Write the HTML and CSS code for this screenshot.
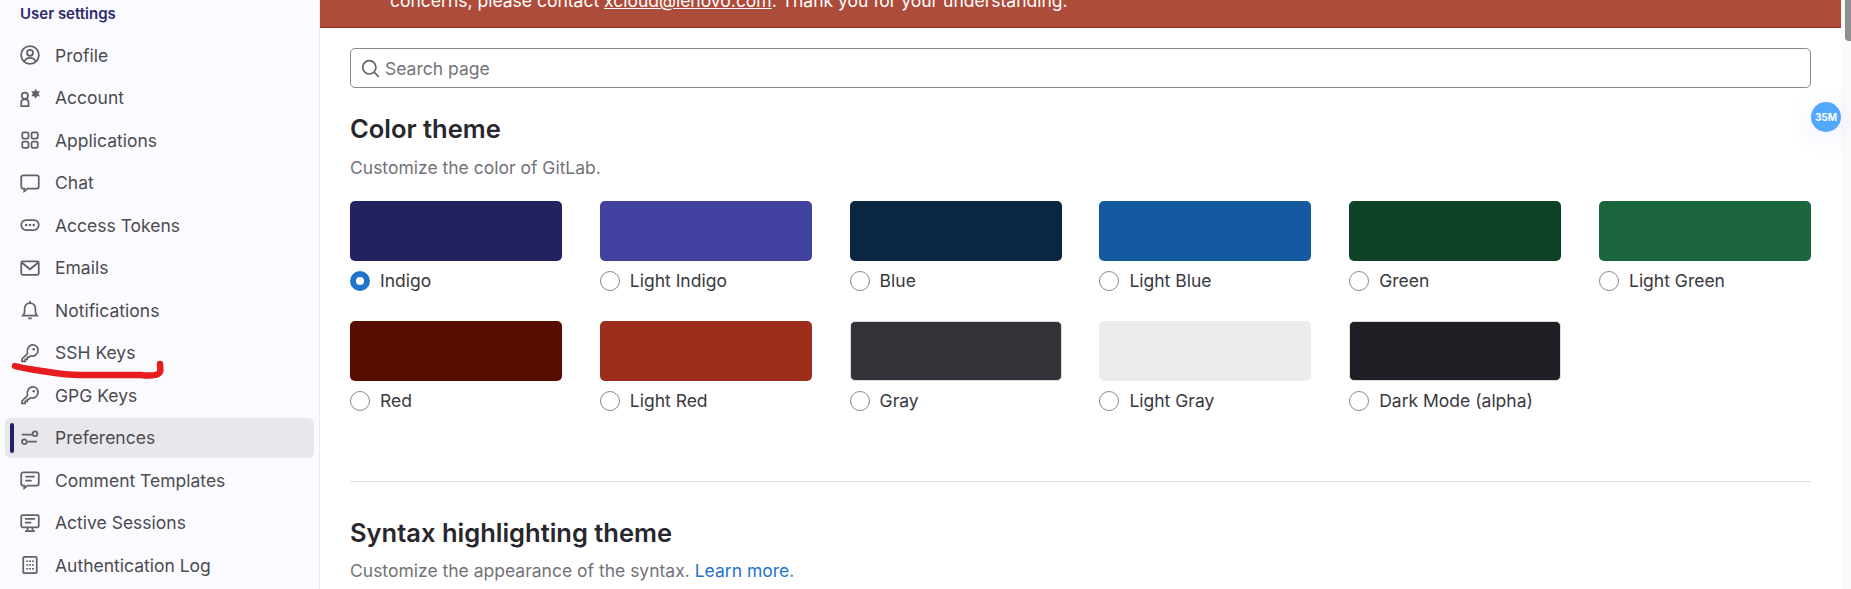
FILE: index.html
```html
<!DOCTYPE html>
<html lang="en">
<head>
    <meta http-equiv="Content-Type" content="text/html; charset=UTF-8">
    <meta name="viewport" content="width=device-width, initial-scale=1.0">
    <title>Preferences</title>
    <link rel="stylesheet" href="styles.css">
</head>
<body>
    <!-- Left navigation -->
    <nav class="sidebar">
        <div class="sidebar-title">User settings</div>
        <a class="nav-item">
            <svg class="nav-icon" viewBox="0 0 16 16"><circle cx="8" cy="8" r="7.1"/><circle cx="8" cy="6.2" r="2.4"/><path d="M3.6 13.2c.6-2 2.3-3 4.4-3s3.8 1 4.4 3"/></svg>
            <span>Profile</span>
        </a>
        <a class="nav-item">
            <svg class="nav-icon" viewBox="0 0 16 16"><circle cx="3.900" cy="6.200" r="2.500"/><path d="M1 14.400v-3c0-1.300 1-2.300 2.300-2.300h1.200c1.300 0 2.300 1 2.300 2.300v3z"/><path class="icon-solid" d="M12.500 .6l1.100 2h2.300l-1.100 2 1.100 2h-2.300l-1.100 2-1.100-2H9.100l1.100-2-1.100-2h2.300z"/></svg>
            <span>Account</span>
        </a>
        <a class="nav-item">
            <svg class="nav-icon" viewBox="0 0 16 16"><rect x="1.800" y="1.800" width="5" height="5" rx="1.300"/><rect x="9.200" y="1.800" width="5" height="5" rx="1.300"/><rect x="1.800" y="9.200" width="5" height="5" rx="1.300"/><rect x="9.200" y="9.200" width="5" height="5" rx="1.300"/></svg>
            <span>Applications</span>
        </a>
        <a class="nav-item">
            <svg class="nav-icon" viewBox="0 0 16 16"><path d="M2.600 1.800h10.800c.9 0 1.600.7 1.600 1.600v7.400c0 .9-.7 1.600-1.600 1.600H6l-2.600 2.200v-2.200h-.8c-.9 0-1.600-.7-1.600-1.600V3.400c0-.9.7-1.600 1.600-1.600z"/></svg>
            <span>Chat</span>
        </a>
        <a class="nav-item">
            <svg class="nav-icon" viewBox="0 0 16 16"><rect x="1" y="4" width="14" height="8" rx="4"/><circle class="icon-solid" cx="5" cy="8" r="1"/><circle class="icon-solid" cx="8" cy="8" r="1"/><circle class="icon-solid" cx="11" cy="8" r="1"/></svg>
            <span>Access Tokens</span>
        </a>
        <a class="nav-item">
            <svg class="nav-icon" viewBox="0 0 16 16"><rect x="1" y="2.600" width="14" height="10.800" rx="1.200"/><path d="M1.400 3.600L8 9l6.600-5.400"/></svg>
            <span>Emails</span>
        </a>
        <a class="nav-item">
            <svg class="nav-icon" viewBox="0 0 16 16"><path d="M2.400 12.400c.9-1 1.300-2 1.300-3.400V6.800c0-2.500 1.800-4.300 4.300-4.300s4.300 1.800 4.300 4.300V9c0 1.400.4 2.400 1.300 3.400z"/><path d="M8 .8v1.600M6.600 14.600h2.800"/></svg>
            <span>Notifications</span>
        </a>
        <a class="nav-item">
            <svg class="nav-icon" viewBox="0 0 16 16"><path d="M6 8.400L1.600 12.800v1.800h2.600v-1.600h1.600v-1.600h1.400l1.200-1.200c2.900.9 6-1.100 6-4.200C14.400 3.400 12.600 1.400 10.200 1.400 7.100 1.400 5.100 5.200 6 8.400z"/><circle class="icon-solid" cx="11" cy="5" r="1"/></svg>
            <span>SSH Keys</span>
        </a>
        <a class="nav-item">
            <svg class="nav-icon" viewBox="0 0 16 16"><path d="M6 8.400L1.600 12.800v1.800h2.600v-1.600h1.600v-1.600h1.400l1.200-1.200c2.900.9 6-1.100 6-4.200C14.400 3.400 12.600 1.400 10.200 1.400 7.100 1.400 5.100 5.200 6 8.400z"/><circle class="icon-solid" cx="11" cy="5" r="1"/></svg>
            <span>GPG Keys</span>
        </a>
        <a class="nav-item active">
            <svg class="nav-icon" viewBox="0 0 16 16"><circle cx="12" cy="4.500" r="1.900"/><circle cx="3.500" cy="11" r="1.900"/><path d="M1.500 5.200h8M6 10.800h7.500"/></svg>
            <span>Preferences</span>
        </a>
        <a class="nav-item">
            <svg class="nav-icon" viewBox="0 0 16 16"><path d="M2.600 1.800h10.800c.9 0 1.600.7 1.600 1.600v7.400c0 .9-.7 1.600-1.600 1.600H6l-2.600 2.200v-2.200h-.8c-.9 0-1.600-.7-1.600-1.600V3.400c0-.9.7-1.600 1.600-1.600z"/><path d="M4.200 5.200h7.600M4.200 8.400h5.200"/></svg>
            <span>Comment Templates</span>
        </a>
        <a class="nav-item">
            <svg class="nav-icon" viewBox="0 0 16 16"><rect x="1" y="1.600" width="14" height="9.800" rx="1"/><path d="M4 4.600h8M4 7.600h5M6 11.600v2.600M10 11.600v2.600M4 14.400h8"/></svg>
            <span>Active Sessions</span>
        </a>
        <a class="nav-item">
            <svg class="nav-icon" viewBox="0 0 16 16"><rect x="2.600" y="1.500" width="10.800" height="13" rx="1"/><path class="icon-dots" d="M5 5h1.500M7.300 5h1.500M9.600 5h1.500M5 8h1.500M7.300 8h1.500M9.600 8h1.500M5 11h1.500M7.300 11h1.500M9.600 11h1.500"/></svg>
            <span>Authentication Log</span>
        </a>
    </nav>

    <!-- Main Content -->
    <main class="content">
        <div class="banner">
            <p class="banner-text">concerns, please contact <a href="#">xcloud@lenovo.com</a>. Thank you for your understanding.</p>
        </div>
        <div class="page">
            <div class="search-box">
                <svg class="search-icon" viewBox="0 0 16 16"><circle cx="7" cy="7" r="5.600"/><path d="M11 11l4 4"/></svg>
                <input class="search-input" type="text" placeholder="Search page">
            </div>

            <h2 class="section-title">Color theme</h2>
            <p class="section-desc">Customize the color of GitLab.</p>
            <div class="theme-grid">
                <label class="theme-card">
                    <span class="swatch swatch-indigo"></span>
                    <span class="theme-label"><input type="radio" name="theme" class="radio" checked>Indigo</span>
                </label>
                <label class="theme-card">
                    <span class="swatch swatch-light-indigo"></span>
                    <span class="theme-label"><input type="radio" name="theme" class="radio">Light Indigo</span>
                </label>
                <label class="theme-card">
                    <span class="swatch swatch-blue"></span>
                    <span class="theme-label"><input type="radio" name="theme" class="radio">Blue</span>
                </label>
                <label class="theme-card">
                    <span class="swatch swatch-light-blue"></span>
                    <span class="theme-label"><input type="radio" name="theme" class="radio">Light Blue</span>
                </label>
                <label class="theme-card">
                    <span class="swatch swatch-green"></span>
                    <span class="theme-label"><input type="radio" name="theme" class="radio">Green</span>
                </label>
                <label class="theme-card">
                    <span class="swatch swatch-light-green"></span>
                    <span class="theme-label"><input type="radio" name="theme" class="radio">Light Green</span>
                </label>
                <label class="theme-card">
                    <span class="swatch swatch-red"></span>
                    <span class="theme-label"><input type="radio" name="theme" class="radio">Red</span>
                </label>
                <label class="theme-card">
                    <span class="swatch swatch-light-red"></span>
                    <span class="theme-label"><input type="radio" name="theme" class="radio">Light Red</span>
                </label>
                <label class="theme-card">
                    <span class="swatch swatch-gray"></span>
                    <span class="theme-label"><input type="radio" name="theme" class="radio">Gray</span>
                </label>
                <label class="theme-card">
                    <span class="swatch swatch-light-gray"></span>
                    <span class="theme-label"><input type="radio" name="theme" class="radio">Light Gray</span>
                </label>
                <label class="theme-card">
                    <span class="swatch swatch-dark"></span>
                    <span class="theme-label"><input type="radio" name="theme" class="radio">Dark Mode (alpha)</span>
                </label>
            </div>

            <hr class="divider">

            <h2 class="section-title syntax-title">Syntax highlighting theme</h2>
            <p class="section-desc">Customize the appearance of the syntax. <a class="link" href="#">Learn more</a>.</p>
        </div>
    </main>

    <!-- Scrollbar -->
    <div class="scroll-track"><div class="scroll-thumb"></div></div>

    <!-- Overlays -->
    <div class="memory-badge">35M</div>
    <svg class="scribble" viewBox="0 0 170 30"><path d="M15 6c7 2 14 3 20 4 15 2 29 5 44 5h62c9 1 18 1 19-3 1-3 0-5 0-8"/></svg>
</body>
</html>
```

FILE: styles.css
```css
* {
    box-sizing: border-box;
}
body {
    margin: 0;
    height: 589px;
    overflow: hidden;
    display: flex;
    position: relative;
    background-color: #fff;
    font-family: Inter, 'Noto Sans', sans-serif;
    font-size: 17.5px;
    color: #3a383f;
}

/* Sidebar */
.sidebar {
    width: 320px;
    flex-shrink: 0;
    padding: 2px 5px 0;
    background-color: #fbfaff;
    border-right: 1px solid #e9e9ee;
}
.sidebar-title {
    height: 23px;
    padding-left: 15px;
    margin-bottom: 10px;
    font-size: 15px;
    line-height: 23px;
    font-weight: 600;
    color: #2f2a6b;
}
.nav-item {
    display: flex;
    align-items: center;
    gap: 15px;
    height: 40px;
    margin-bottom: 2.5px;
    padding-left: 15px;
    border-radius: 6px;
    position: relative;
    color: #4c4b51;
}
.nav-item.active {
    background-color: #e7e7ec;
}
.nav-item.active::before {
    content: "";
    position: absolute;
    left: 5px;
    top: 5px;
    width: 4px;
    height: 30px;
    border-radius: 2px;
    background-color: #222261;
}
.nav-icon {
    width: 20px;
    height: 20px;
    flex-shrink: 0;
    fill: none;
    stroke: #626168;
    stroke-width: 1.4;
}
.nav-icon .icon-solid {
    fill: #626168;
    stroke: none;
}
.nav-icon .icon-dots {
    stroke-width: 1.3;
}

/* Main column */
.content {
    width: 1521px;
    flex-shrink: 0;
}
.banner {
    height: 28px;
    overflow: hidden;
    display: flex;
    align-items: flex-end;
    padding: 0 0 15px 70px;
    background-color: #ad4c3b;
    border-bottom: 1px solid #9c2a1c;
}
.banner-text {
    margin: 0;
    line-height: 22px;
    white-space: nowrap;
    color: #fff;
}
.banner-text a {
    color: #fff;
}
.page {
    padding: 20px 30px 0;
}
.search-box {
    display: flex;
    align-items: center;
    gap: 5px;
    height: 40px;
    padding: 0 10px;
    border: 1.2px solid #89888d;
    border-radius: 5px;
    background-color: #fff;
}
.search-icon {
    width: 19px;
    height: 19px;
    flex-shrink: 0;
    fill: none;
    stroke: #626168;
    stroke-width: 1.4;
}
.search-input {
    flex: 1;
    border: none;
    outline: none;
    padding: 0;
    font-family: inherit;
    font-size: 17.5px;
    color: #3a383f;
}
.search-input::placeholder {
    color: #737278;
    opacity: 1;
}
.section-title {
    margin: 24px 0 10px;
    font-size: 25.5px;
    line-height: 34px;
    font-weight: 600;
    color: #28272d;
}
.section-desc {
    margin: 0;
    line-height: 24px;
    color: #737278;
}
.link {
    color: #1f75cb;
    text-decoration: none;
}

/* Theme swatches */
.theme-grid {
    display: grid;
    grid-template-columns: repeat(6, 1fr);
    column-gap: 37.8px;
    row-gap: 30px;
    margin-top: 21px;
}
.theme-card {
    display: flex;
    flex-direction: column;
    gap: 10px;
}
.swatch {
    display: block;
    height: 60px;
    border-radius: 5px;
}
.swatch-indigo { background-color: #222261; }
.swatch-light-indigo { background-color: #41419f; }
.swatch-blue { background-color: #0b2640; }
.swatch-light-blue { background-color: #145aa1; }
.swatch-green { background-color: #0e4328; }
.swatch-light-green { background-color: #1b653f; }
.swatch-red { background-color: #580d02; }
.swatch-light-red { background-color: #9e2e1c; }
.swatch-gray { background-color: #333238; border: 1px solid #dcdcde; }
.swatch-light-gray { background-color: #ececef; }
.swatch-dark { background-color: #1f1e24; border: 1px solid #dcdcde; }
.theme-label {
    display: flex;
    align-items: center;
    gap: 10px;
    height: 20px;
    line-height: 20px;
    white-space: nowrap;
}
.radio {
    appearance: none;
    width: 20px;
    height: 20px;
    margin: 0;
    flex-shrink: 0;
    border: 1.2px solid #89888d;
    border-radius: 50%;
    background-color: #fff;
}
.radio:checked {
    border: 6.5px solid #1f75cb;
}
.divider {
    margin: 70px 0 0;
    border: none;
    border-top: 1.5px solid #dcdcde;
}
.syntax-title {
    margin-top: 34px;
    margin-bottom: 9px;
}

/* Scrollbar */
.scroll-track {
    flex: 1;
    height: 589px;
    background-color: #fafafa;
    display: flex;
    justify-content: flex-end;
}
.scroll-thumb {
    width: 6px;
    height: 41px;
    background-color: #8f8f8f;
    border-bottom-left-radius: 4px;
}

/* Things lying over the page */
.memory-badge {
    position: absolute;
    left: 1811px;
    top: 102px;
    width: 30px;
    height: 30px;
    border-radius: 50%;
    background-color: #52a7ff;
    box-shadow: 0 4px 24px rgba(82, 100, 255, 0.12);
    color: #fff;
    font-size: 10px;
    font-weight: 700;
    line-height: 30px;
    text-align: center;
}
.scribble {
    position: absolute;
    left: 0;
    top: 360px;
    width: 170px;
    height: 30px;
    fill: none;
    stroke: #e81c1e;
    stroke-width: 6.5;
    stroke-linecap: round;
    stroke-linejoin: round;
}
```
